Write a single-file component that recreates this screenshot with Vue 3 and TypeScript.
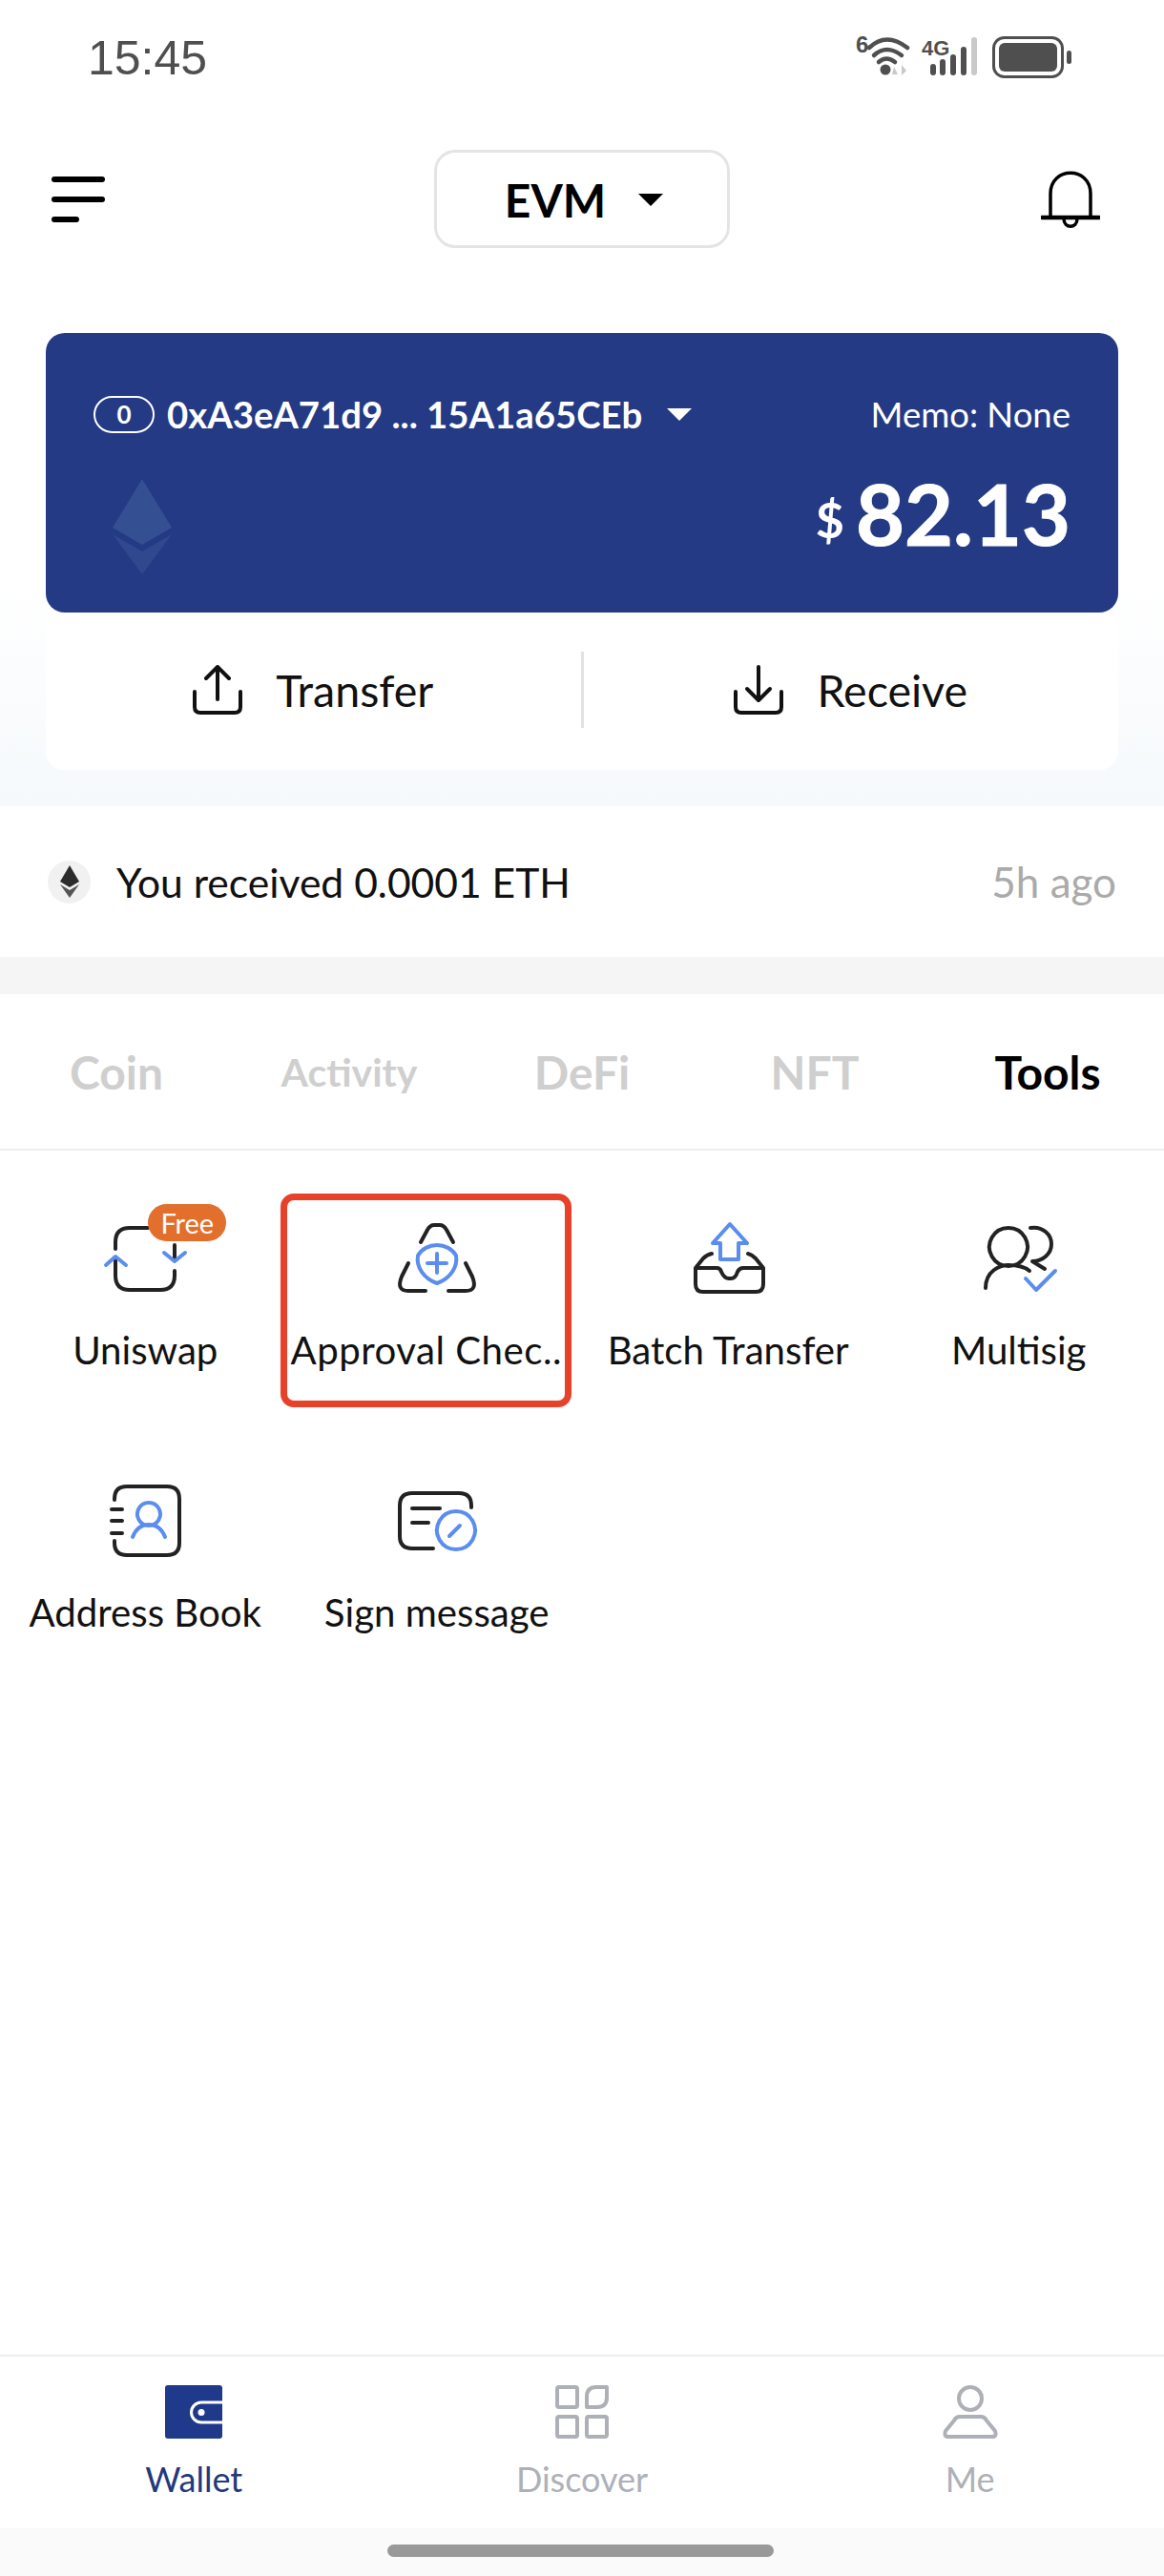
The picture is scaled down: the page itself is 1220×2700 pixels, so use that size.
<template>
  <div class="page">
    <div class="status">
      <span class="time">15:45</span>
      <svg class="status-icons" width="238" height="56" viewBox="886 33 238 56">
        <text x="897" y="55" class="net six">6</text>
        <g fill="none" stroke="#4f4f4f" stroke-width="4.5" stroke-linecap="round">
          <path d="M911 50 Q929 33 951 50" />
          <path d="M916 58 Q929 46 945 58" />
          <path d="M921 65 Q929 58 938 65" />
        </g>
        <circle cx="928" cy="73" r="5.5" fill="#4f4f4f" />
        <path d="M937 70 L941 78 H935 Z M945 68 L950 74 L945 79 Z" fill="#c9c9c9" />
        <text x="966" y="58" class="net">4G</text>
        <g stroke-width="6" stroke-linecap="round">
          <path d="M978 70 V76 M988 65 V76 M999 60 V76 M1010 52 V76" stroke="#4f4f4f" />
          <path d="M1021 42 V76" stroke="#c9c9c9" />
        </g>
        <rect x="1041.5" y="39.5" width="72" height="41" rx="11" fill="none" stroke="#4f4f4f" stroke-width="3" />
        <rect x="1047" y="45" width="61" height="30" rx="6" fill="#4f4f4f" />
        <rect x="1118" y="53" width="5" height="14" rx="2.5" fill="#4f4f4f" />
      </svg>
    </div>

    <div class="header">
      <div class="menu"><i class="long"></i><i class="long"></i><i class="short"></i></div>
      <div class="chain">
        <span>EVM</span>
        <i class="caret"></i>
      </div>
      <svg class="bell" width="62" height="64" viewBox="0 0 62 64" fill="none" stroke="#000" stroke-width="3.5">
        <path d="M10 50 V26 C10 -3 52 -3 52 26 V50" />
        <path d="M1 51 H61" stroke-width="4.5" stroke-linecap="round" />
        <path d="M24 52 C24 63 38 63 38 52" />
      </svg>
    </div>

    <section class="wallet">
      <div class="card">
        <div class="card-top">
          <div class="address">
            <span class="index">0</span>
            <span>0xA3eA71d9 ... 15A1a65CEb</span>
            <i class="caret small"></i>
          </div>
          <span class="memo">Memo: None</span>
        </div>
        <div class="card-bottom">
          <svg width="62" height="100" viewBox="0 0 62 100">
            <path d="M31 0 L62 51 L31 69 L0 51 Z" fill="#354f93" />
            <path d="M0 58 L31 76 L62 58 L31 100 Z" fill="#30488d" />
          </svg>
          <div class="balance"><span class="dollar">$</span><span class="amount">82.13</span></div>
        </div>
      </div>
      <div class="actions">
        <div class="action">
          <svg width="52" height="52" viewBox="0 0 52 52" fill="none" stroke="#111" stroke-width="4" stroke-linecap="round" stroke-linejoin="round">
            <path d="M26 36 V3 M14 14 L26 2 L38 14" />
            <path d="M2 28 V44 Q2 50 8 50 H44 Q50 50 50 44 V28" />
          </svg>
          <span>Transfer</span>
        </div>
        <div class="action">
          <svg width="52" height="52" viewBox="0 0 52 52" fill="none" stroke="#111" stroke-width="4" stroke-linecap="round" stroke-linejoin="round">
            <path d="M26 2 V36 M14 25 L26 37 L38 25" />
            <path d="M2 28 V44 Q2 50 8 50 H44 Q50 50 50 44 V28" />
          </svg>
          <span>Receive</span>
        </div>
      </div>
    </section>

    <div class="notice">
      <div class="notice-text">
        <span class="eth-dot">
          <svg width="20" height="34" viewBox="0 0 20 34">
            <path d="M10 0 L20 17 L10 23 L0 17 Z" fill="#2c2c2c" />
            <path d="M0 20 L10 26 L20 20 L10 34 Z" fill="#555" />
          </svg>
        </span>
        <span>You received 0.0001 ETH</span>
      </div>
      <span class="ago">5h ago</span>
    </div>

    <div class="strip"></div>

    <div class="tabs">
      <span v-for="tab in tabs" :key="tab" class="tab" :class="{ active: tab === 'Tools', small: tab === 'Activity' }">{{ tab }}</span>
    </div>

    <div class="tools">
      <div v-for="tool in tools" :key="tool.label" class="tool">
        <div v-if="tool.marked" class="marker"></div>
        <div class="tool-icon">
          <svg width="100" height="90" :viewBox="tool.view" fill="none" stroke-width="4" stroke-linecap="round" stroke-linejoin="round">
            <path :d="tool.dark" stroke="#222" />
            <path :d="tool.blue" stroke="#5b8def" />
          </svg>
          <span v-if="tool.badge" class="badge">{{ tool.badge }}</span>
        </div>
        <span class="tool-label" :class="{ shifted: tool.marked }">{{ tool.label }}</span>
      </div>
    </div>

    <div class="spacer"></div>

    <nav class="nav">
      <div class="nav-item current">
        <svg width="60" height="56" viewBox="0 0 60 56">
          <rect width="60" height="56" rx="3" fill="#1f3a8a" />
          <path d="M60 18 H38 A10.500 10.500 0 0 0 38 39 H60" fill="none" stroke="#fff" stroke-width="3" />
          <circle cx="38" cy="28.500" r="3.500" fill="#fff" />
        </svg>
        <span>Wallet</span>
      </div>
      <div class="nav-item">
        <svg width="56" height="56" viewBox="0 0 56 56" fill="none" stroke="#aeb0b8" stroke-width="4" stroke-linejoin="round">
          <rect x="2" y="2" width="21" height="21" rx="2" />
          <path d="M33 23 V12 Q33 2 43 2 H54 V13 Q54 23 44 23 Z" />
          <rect x="2" y="33" width="21" height="21" rx="2" />
          <rect x="33" y="33" width="21" height="21" rx="2" />
        </svg>
        <span>Discover</span>
      </div>
      <div class="nav-item">
        <svg width="58" height="56" viewBox="0 0 58 56" fill="none" stroke="#aeb0b8" stroke-width="4" stroke-linejoin="round">
          <circle cx="29" cy="14" r="12" />
          <path d="M18 33 H40 Q44 33 46 37 L55 48 Q57 54 52 54 H6 Q1 54 3 48 L12 37 Q14 33 18 33 Z" />
        </svg>
        <span>Me</span>
      </div>
    </nav>
    <div class="home-bar"><i></i></div>
  </div>
</template>

<script setup lang="ts">
interface ITool {
  label: string;
  view: string;
  dark: string;
  blue: string;
  badge?: string;
  marked?: boolean;
}

const tabs: string[] = ["Coin", "Activity", "DeFi", "NFT", "Tools"];

const tools: ITool[] = [
  {
    label: "Uniswap",
    view: "0 0 100 90",
    badge: "Free",
    dark: "M19 37 V30 Q19 15 34 15 H53 M19 47 V65 Q19 80 34 80 H66 Q81 80 81 65 V60 M81 33 V48",
    blue: "M9 54 L19 45 L30 54 M70 41 L81 50 L92 41",
  },
  {
    label: "Approval Chec..",
    view: "0 0 100 90",
    marked: true,
    dark: "M33 30 L40 17 Q43 12 47 12 H53 Q57 12 60 17 L67 30 M20 52 L13 66 Q7 81 20 81 H38 M80 52 L87 66 Q93 81 80 81 H62",
    blue: "M50 33 C58 33 66 37 70 44 C72 56 64 68 50 73 C36 68 28 56 30 44 C34 37 42 33 50 33 Z M40 52 H60 M50 42 V62",
  },
  {
    label: "Batch Transfer",
    view: "0 0 100 90",
    dark: "M17 57 H38 Q42 57 43 61 Q46 68 51 68 H53 Q58 68 60 61 Q62 57 66 57 H87 V74 Q87 82 79 82 H24 Q16 82 16 74 V57 L24 47 Q28 43 33 42 M87 57 L79 47 Q75 43 71 42",
    blue: "M52 11 L70 31 H61 V48 H42 V31 H34 Z",
  },
  {
    label: "Multisig",
    view: "0 0 100 90",
    dark: "M39 15 A20 20 0 1 1 38.900 15 Z M15 78 C15 60 30 54 39 54 C48 54 55 55 61 60 M62 15 C75 13 84 22 84 32 C84 42 75 50 64 50 L77 58",
    blue: "M57 68 L68 80 L88 60",
  },
  {
    label: "Address Book",
    view: "0 2 100 90",
    dark: "M18 27 V26 Q18 13 31 13 H73 Q86 13 86 26 V72 Q86 85 73 85 H31 Q18 85 18 72 V70 M15 37 H26 M15 49 H26 M15 62 H26",
    blue: "M54 30 A12 12 0 1 1 53.900 30 Z M37 66 C41 56 47 53 54 53 C61 53 67 56 71 66",
  },
  {
    label: "Sign message",
    view: "0 2 100 90",
    dark: "M86 35 V33 Q86 20 73 20 H24 Q11 20 11 33 V65 Q11 78 24 78 H46 M24 36 H53 M24 51 H41",
    blue: "M70 39 A20 20 0 1 1 69.900 39 Z M63 65 L74 54",
  },
];
</script>

<style>
body {
  background: #fff;
}
</style>

<style scoped>
.page {
  width: 1220px;
  height: 2700px;
  display: flex;
  flex-direction: column;
  background: #fff;
  font-family: Lato, "Open Sans", sans-serif;
  color: #111;
  overflow: hidden;
}
i {
  display: block;
}
.status {
  height: 100px;
  box-sizing: border-box;
  padding: 22px 96px 0 92px;
  display: flex;
  align-items: center;
  justify-content: space-between;
}
.time {
  font-family: "Liberation Sans", sans-serif;
  font-size: 50px;
  color: #4f4f4f;
}
.net {
  font-family: "Liberation Sans", sans-serif;
  font-size: 22px;
  font-weight: 700;
  fill: #4f4f4f;
}
.six {
  font-size: 24px;
}
.header {
  margin-top: 57px;
  height: 103px;
  padding: 0 54px;
  display: grid;
  grid-template-columns: 1fr 310px 1fr;
  align-items: center;
}
.bell {
  justify-self: end;
  margin-right: 13px;
}
.menu {
  width: 56px;
  display: flex;
  flex-direction: column;
  gap: 15px;
}
.menu i {
  height: 6px;
  border-radius: 3px;
  background: #000;
}
.menu .short {
  width: 29px;
}
.chain {
  height: 103px;
  box-sizing: border-box;
  border: 3px solid #e4e4e4;
  border-radius: 22px;
  display: flex;
  align-items: center;
  justify-content: center;
  gap: 34px;
  padding: 2px 0 0 4px;
  font-size: 48px;
  font-weight: 700;
  color: #000;
}
.caret {
  width: 0;
  height: 0;
  border-left: 13px solid transparent;
  border-right: 13px solid transparent;
  border-top: 13px solid #000;
}
.caret.small {
  border-top-color: #fff;
  margin-left: 13px;
}
.wallet {
  padding: 89px 48px 38px;
  background: linear-gradient(#fff 60%, #f5f9fb);
}
.card {
  height: 293px;
  box-sizing: border-box;
  padding: 62px 50px 0;
  border-radius: 20px;
  background: #243a84;
  color: #fff;
}
.card-top {
  display: flex;
  align-items: center;
  justify-content: space-between;
}
.address {
  display: flex;
  align-items: center;
  gap: 13px;
  font-size: 38.300px;
  font-weight: 700;
}
.index {
  width: 64px;
  height: 39px;
  box-sizing: border-box;
  border: 2.500px solid #fff;
  border-radius: 20px;
  display: flex;
  align-items: center;
  justify-content: center;
  font-size: 26px;
}
.memo {
  font-size: 36.500px;
}
.card-bottom {
  margin-top: 45px;
  padding-left: 20px;
  display: flex;
  align-items: flex-start;
  justify-content: space-between;
}
.balance {
  display: flex;
  align-items: center;
  gap: 12px;
  margin-top: -8px;
}
.dollar {
  font-size: 52px;
  font-weight: 700;
  margin-top: 12px;
}
.amount {
  font-size: 88px;
  line-height: 88px;
  font-weight: 700;
  -webkit-text-stroke: 1px #fff;
}
.actions {
  height: 165px;
  display: flex;
  align-items: center;
  background: #fff;
  border-radius: 0 0 20px 20px;
}
.action {
  flex: 1;
  display: flex;
  align-items: center;
  justify-content: center;
  gap: 35px;
  height: 80px;
  font-size: 46.500px;
  margin-top: -3px;
}
.action + .action {
  border-left: 3px solid #e2e2e2;
}
.notice {
  height: 158px;
  padding: 0 50px;
  display: flex;
  align-items: center;
  justify-content: space-between;
  font-size: 44px;
}
.notice-text {
  display: flex;
  align-items: center;
  gap: 27px;
  font-size: 42.600px;
}
.eth-dot {
  width: 45px;
  height: 45px;
  border-radius: 50%;
  background: #f1f1f1;
  display: flex;
  align-items: center;
  justify-content: center;
}
.ago {
  color: #aaa;
}
.strip {
  height: 39px;
  background: #f5f5f5;
}
.tabs {
  height: 164px;
  box-sizing: border-box;
  border-bottom: 2px solid #efefef;
  display: grid;
  grid-template-columns: repeat(5, 1fr);
  align-items: center;
  text-align: center;
}
.tab {
  font-size: 48px;
  font-weight: 700;
  color: #cfcfcf;
}
.tab.small {
  font-size: 41px;
}
.tab.active {
  color: #000;
}
.tools {
  display: grid;
  grid-template-columns: repeat(4, 1fr);
  grid-auto-rows: 275px;
  padding-top: 66px;
}
.tool {
  position: relative;
  display: flex;
  flex-direction: column;
  align-items: center;
}
.tool-icon {
  position: relative;
  height: 90px;
  width: 100px;
}
.tool-label {
  margin-top: 28px;
  line-height: 50px;
  font-size: 40.200px;
  white-space: nowrap;
}
.tool-label.shifted {
  letter-spacing: 0.500px;
  margin-right: 22px;
}
.marker {
  position: absolute;
  left: -11px;
  top: -21px;
  width: 305px;
  height: 224px;
  box-sizing: border-box;
  border: 7px solid #e8412a;
  border-radius: 14px;
}
.badge {
  position: absolute;
  left: 53px;
  top: -10px;
  width: 82px;
  height: 39px;
  border-radius: 20px;
  background: #e2702c;
  color: #fff;
  font-size: 29px;
  line-height: 39px;
  text-align: center;
}
.spacer {
  flex: 1;
}
.nav {
  height: 182px;
  box-sizing: border-box;
  padding-top: 30px;
  border-top: 2px solid #eeeeee;
  display: grid;
  grid-template-columns: 1fr 1fr 1fr;
}
.nav-item {
  display: flex;
  flex-direction: column;
  align-items: center;
  font-size: 36px;
  color: #aeb0b8;
}
.nav-item span {
  margin-top: 20px;
  line-height: 44px;
}
.nav-item.current {
  color: #22397c;
}
.home-bar {
  height: 50px;
  box-sizing: border-box;
  padding: 17px 3px 0 0;
  background: #fafafa;
  display: flex;
  justify-content: center;
}
.home-bar i {
  width: 405px;
  height: 13px;
  border-radius: 7px;
  background: #999;
}
</style>
